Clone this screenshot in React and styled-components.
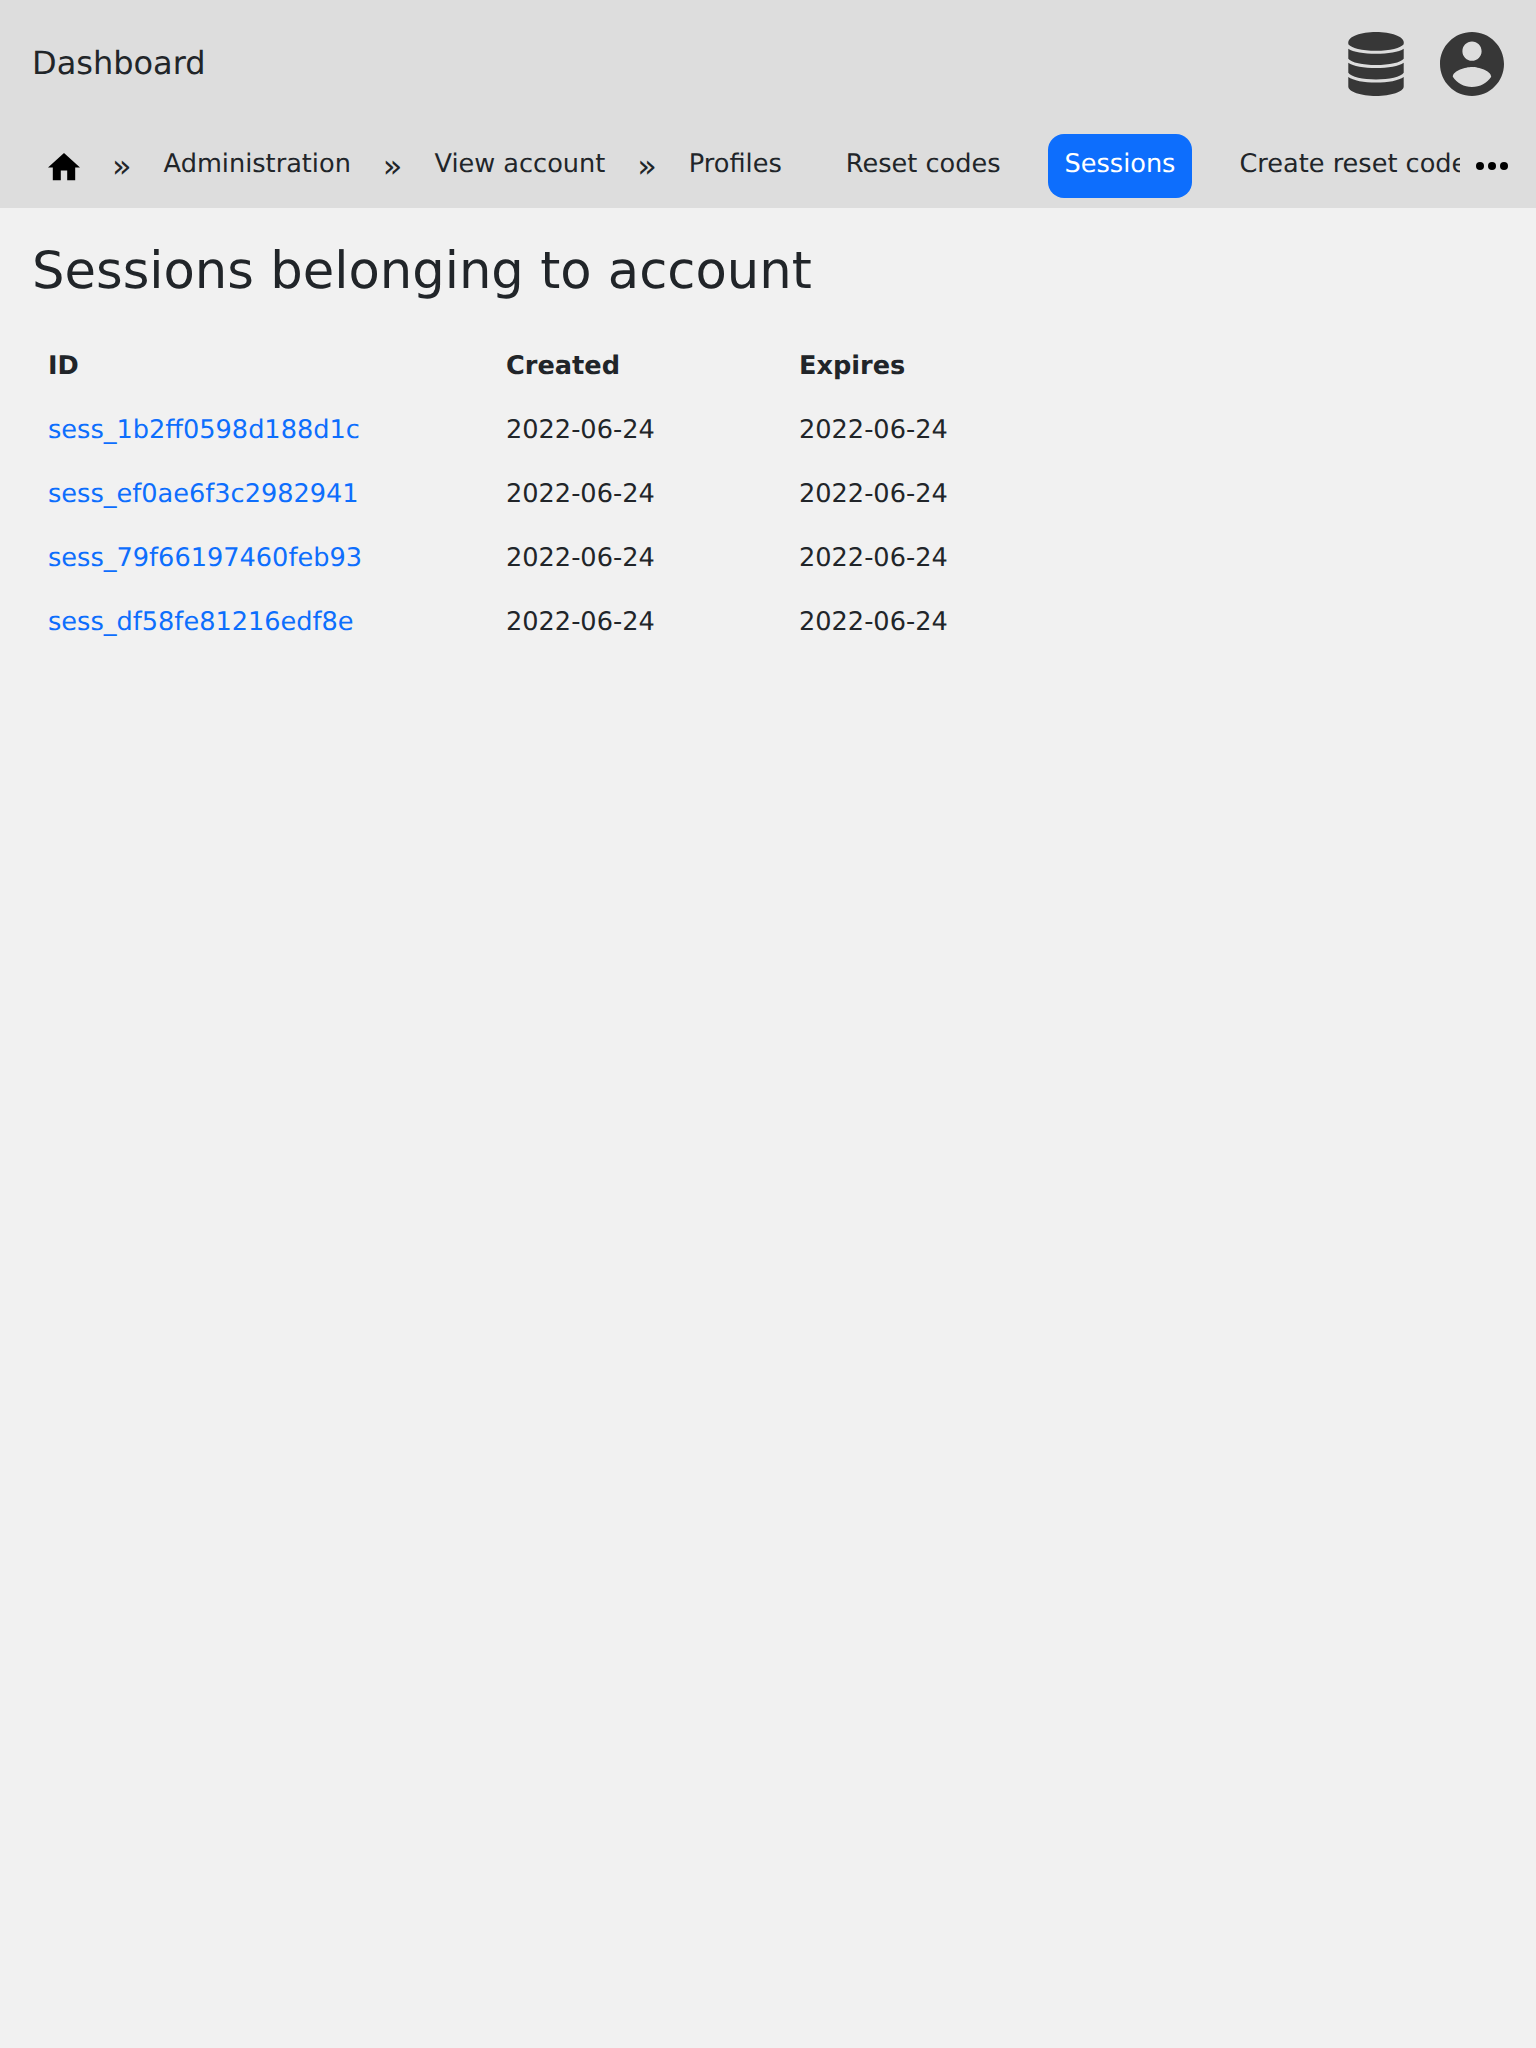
import React from "react";
import styled, { createGlobalStyle } from "styled-components";

const GlobalStyle = createGlobalStyle`
  body {
    margin: 0;
    background: #f1f1f1;
    color: #212529;
    font-family: "DejaVu Sans", sans-serif;
    font-size: 25.6px;
    line-height: 32px;
    text-rendering: geometricPrecision;
  }
`;

const Header = styled.header`
  background: #ddd;
`;

const TopBar = styled.div`
  display: flex;
  align-items: center;
  justify-content: space-between;
  height: 128px;
  padding: 0 32px;
  box-sizing: border-box;
`;

const Brand = styled.a`
  padding-bottom: 2px;
  font-size: 32px;
  line-height: 48px;
`;

const Tools = styled.div`
  display: flex;
  gap: 36px;
  color: #373737;
`;

const Icon = styled.svg`
  display: block;
  flex: none;
  width: ${(p) => p.$w}px;
  height: ${(p) => p.$h}px;
  fill: currentColor;
`;

const Nav = styled.nav`
  display: flex;
  align-items: center;
  height: 80px;
  padding: 0 28px 4px 32px;
  box-sizing: border-box;
  color: #000;
`;

const Crumbs = styled.div`
  display: flex;
  align-items: center;
  flex: 1;
  min-width: 0;
  height: 64px;
  overflow: hidden;
  margin-right: 16px;
  color: #212529;
`;

const Crumb = styled.a`
  flex: none;
  padding: 14px 16px 18px;
  margin-right: ${(p) => (p.$spaced ? 32 : 0)}px;
  border-radius: 16px;
  white-space: nowrap;
`;

const ActiveCrumb = styled(Crumb)`
  padding-right: 17px;
  margin-right: 31px;
  background: #0d6efd;
  color: #fff;
`;

const HomeLink = styled.a`
  flex: none;
  padding: 2px 16px 0;
  color: #000;
`;

const Separator = styled.span`
  flex: none;
  padding: 0 16px;
  font-size: 32px;
`;

const Main = styled.main`
  padding: 33px 32px 32px;
`;

const Title = styled.h1`
  margin: 0 0 32px;
  font-size: 51.2px;
  font-weight: 400;
  line-height: 61px;
`;

const Table = styled.table`
  border-collapse: collapse;
`;

const Cell = styled.td`
  padding: 16px;
  text-align: left;
`;

const HeadCell = styled.th`
  width: ${(p) => p.$w}px;
  padding: 16px;
  box-sizing: border-box;
  text-align: left;
  font-weight: 700;
`;

const SessionLink = styled.a`
  color: #0d6efd;
`;

const columns = [
  { label: "ID", width: 458 },
  { label: "Created", width: 293 },
  { label: "Expires", width: 293 },
];

const sessions = [
  { id: "sess_1b2ff0598d188d1c", created: "2022-06-24", expires: "2022-06-24" },
  { id: "sess_ef0ae6f3c2982941", created: "2022-06-24", expires: "2022-06-24" },
  { id: "sess_79f66197460feb93", created: "2022-06-24", expires: "2022-06-24" },
  { id: "sess_df58fe81216edf8e", created: "2022-06-24", expires: "2022-06-24" },
];

const DatabaseIcon = () => (
  <Icon $w={56} $h={64} viewBox="0 0 56 64">
    <path d="M28 0C43 0 55.7 4.5 55.7 10.300v1.900C53 16 42 18.700 28 18.700S3 16 .3 12.200v-1.900C.3 4.500 13 0 28 0z" />
    <path d="M.3 16.700C5 20 16 21.800 28 21.800s23-1.800 27.700-5.100v10C53 30.500 41 33 28 33S3 30.500.3 26.700z" />
    <path d="M.3 30.700C5 34.100 16 36.100 28 36.100s23-2 27.700-5.400v10C53 44.800 41 47.400 28 47.400S3 44.800.3 40.700z" />
    <path d="M.3 44.900C5 48.400 16 50.600 28 50.600s23-2.200 27.700-5.700V54.500C55.700 59.700 43 64 28 64S.3 59.700.3 54.500z" />
  </Icon>
);

const AccountIcon = () => (
  <Icon $w={64} $h={64} viewBox="2 2 20 20">
    <path d="M12 2C6.480 2 2 6.480 2 12s4.480 10 10 10 10-4.480 10-10S17.520 2 12 2zm0 3c1.660 0 3 1.340 3 3s-1.340 3-3 3-3-1.340-3-3 1.340-3 3-3zm0 14.200c-2.500 0-4.710-1.280-6-3.220.03-1.990 4-3.080 6-3.080 1.990 0 5.970 1.090 6 3.080-1.290 1.940-3.500 3.220-6 3.220z" />
  </Icon>
);

const HomeIcon = () => (
  <Icon $w={32} $h={27.2} viewBox="2 3 20 17">
    <path d="M10 20v-6h4v6h5v-8h3L12 3 2 12h3v8z" />
  </Icon>
);

const MoreIcon = () => (
  <Icon $w={32} $h={8} viewBox="4 10 16 4">
    <circle cx="6" cy="12" r="2" />
    <circle cx="12" cy="12" r="2" />
    <circle cx="18" cy="12" r="2" />
  </Icon>
);

export default function App() {
  return (
    <>
      <GlobalStyle />
      <Header>
        <TopBar>
          <Brand>Dashboard</Brand>
          <Tools>
            <DatabaseIcon />
            <AccountIcon />
          </Tools>
        </TopBar>
        <Nav>
          <Crumbs>
            <HomeLink>
              <HomeIcon />
            </HomeLink>
            <Separator>»</Separator>
            <Crumb>Administration</Crumb>
            <Separator>»</Separator>
            <Crumb>View account</Crumb>
            <Separator>»</Separator>
            <Crumb $spaced>Profiles</Crumb>
            <Crumb $spaced>Reset codes</Crumb>
            <ActiveCrumb>Sessions</ActiveCrumb>
            <Crumb>Create reset code</Crumb>
          </Crumbs>
          <MoreIcon />
        </Nav>
      </Header>
      <Main>
        <Title>Sessions belonging to account</Title>
        <Table>
          <thead>
            <tr>
              {columns.map(({ label, width }) => (
                <HeadCell $w={width} key={label}>{label}</HeadCell>
              ))}
            </tr>
          </thead>
          <tbody>
            {sessions.map(({ id, created, expires }) => (
              <tr key={id}>
                <Cell><SessionLink>{id}</SessionLink></Cell>
                <Cell>{created}</Cell>
                <Cell>{expires}</Cell>
              </tr>
            ))}
          </tbody>
        </Table>
      </Main>
    </>
  );
}
